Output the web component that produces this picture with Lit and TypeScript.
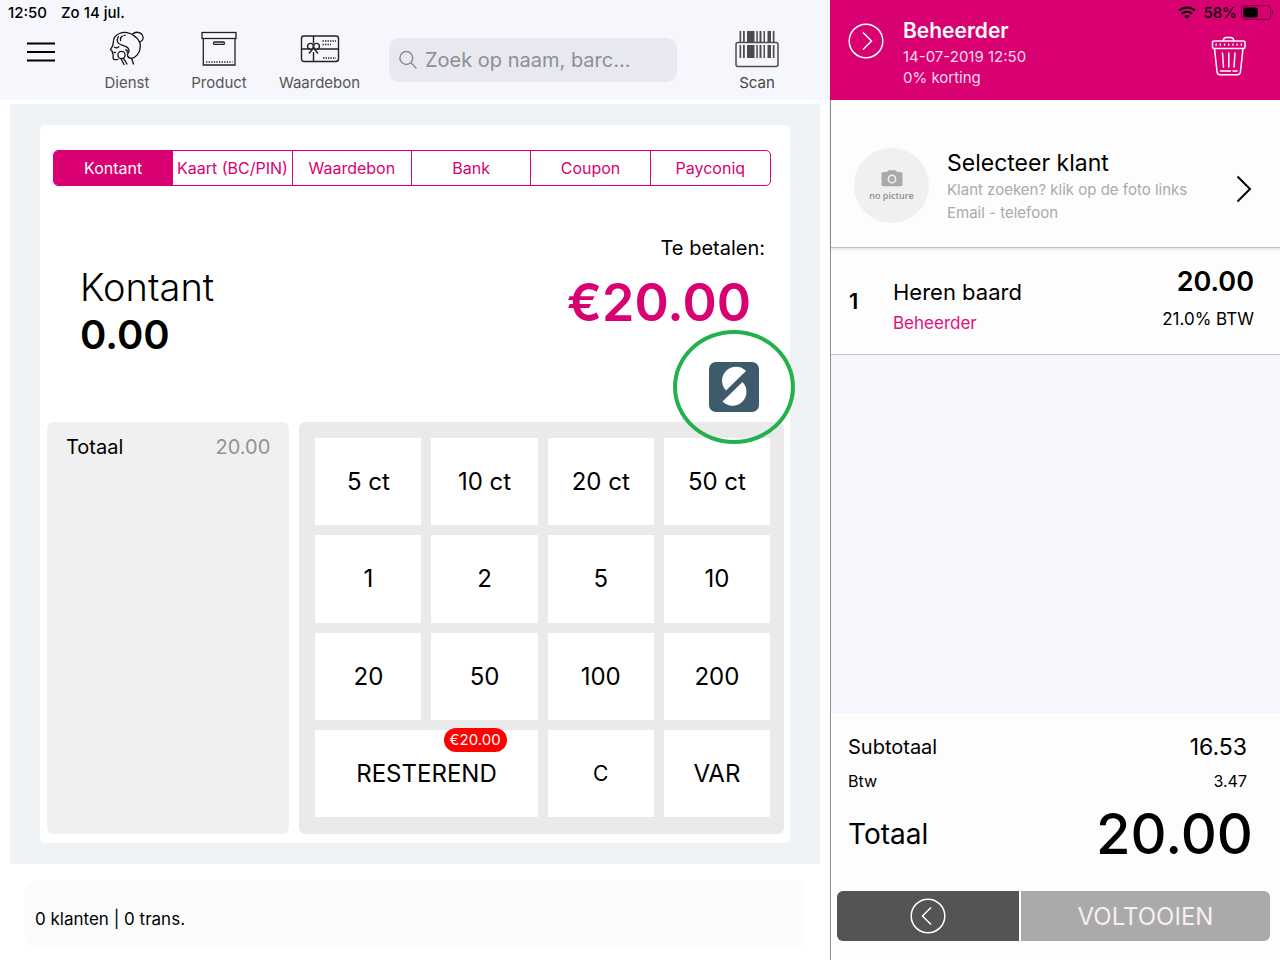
import { LitElement, html, css, svg } from "lit";
import { customElement, state } from "lit/decorators.js";
import { classMap } from "lit/directives/class-map.js";

const methods = ["Kontant", "Kaart (BC/PIN)", "Waardebon", "Bank", "Coupon", "Payconiq"];

const keys = [
  "5 ct", "10 ct", "20 ct", "50 ct",
  "1", "2", "5", "10",
  "20", "50", "100", "200",
];

const faceIcon = svg`
  <svg width="36" height="36" viewBox="0 0 36 36" fill="none" stroke="#111" stroke-width="1.3" stroke-linecap="round" stroke-linejoin="round">
    <path d="M26 5.500C21.500 1.200 15 .6 10.500 2.500C6.500 4 4.300 7.500 4.300 11.500C4.300 14.500 2.800 16.500 1.500 18.700C1.300 19.300 3 19.600 3.200 20.200L3.500 22.500L4.300 24L4 27C4.200 28.800 6.500 28.800 9 28.400"/>
    <path d="M23.500 3.300C25.500 .6 30.500 .4 33 3.500C35.300 6.800 33.800 10 31 11"/>
    <path d="M26 5.500C29.500 8 31.700 11.500 31.300 16C31 22 27 26.800 22.500 27.300L24.500 33"/>
    <path d="M9.300 5.500C7 10 8.500 13 13 14.200C17 15.200 20.300 17 20 20C19.800 22.300 18 22.500 18.500 24.500C19 26.300 20.500 27.300 22.500 27.300"/>
    <path d="M11.500 9.500C11 6.500 13 4.300 16 4.400" stroke-dasharray="5 2 1 2"/>
    <path d="M5.500 16.300C7 17.300 8.500 17 9.800 15.800"/>
    <circle cx="12.500" cy="24" r="3.600"/>
    <path d="M12 27.800L15 33.500M14.500 27.400L18 33M5 21.500H6.500"/>
    <path d="M16.500 19C18 18.500 19 20 18 21.300"/>
  </svg>`;

const boxIcon = svg`
  <svg width="36" height="36" viewBox="0 0 36 36" fill="none" stroke="#222" stroke-width="1.3">
    <rect x="1" y="1.500" width="34" height="6"/>
    <path d="M2.300 7.500V34H34V7.500"/>
    <rect x="12.500" y="11" width="11" height="2.400" rx="1.200"/>
    <path d="M5 31H31.500" stroke-dasharray="1.300 1.300"/>
  </svg>`;

const giftIcon = svg`
  <svg width="40" height="36" viewBox="0 0 40 36" fill="none" stroke="#222" stroke-width="1.400">
    <rect x="1.500" y="5" width="37" height="25.500" rx="2.500"/>
    <path d="M13.500 5V12.500M13.500 21V30.500M1.500 18H10M17 18H38.500"/>
    <circle cx="10.500" cy="15.300" r="2.900"/>
    <circle cx="16.500" cy="15.300" r="2.900"/>
    <path d="M13.500 17L9 22.500M13.500 17L18 22.500"/>
    <path d="M22.500 10H36M22.500 13.500H31M23 27H36" stroke-dasharray="1.400 1.100"/>
  </svg>`;

const scanIcon = svg`
  <svg width="44" height="38" viewBox="0 0 44 38" fill="#4c4c4c">
    <path d="M4.500 0H6.200V11H4.500ZM8 0H9.800V11H8ZM12 0H19.500V11H12ZM21.300 0H22.800V11H21.300ZM24.500 0H26.500V11H24.500ZM28.500 0H30V11H28.500ZM32.500 0H36V11H32.500ZM37.800 0H39.500V11H37.800Z"/>
    <path d="M4.500 14H6.200V27H4.500ZM8 14H9.800V27H8ZM12 14H19.500V27H12ZM21.300 14H22.800V27H21.300ZM24.500 14H26.500V27H24.500ZM28.500 14H30V27H28.500ZM32.500 14H36V27H32.500ZM37.800 14H39.500V27H37.800Z"/>
    <rect x="1" y="11.500" width="42" height="24" rx="2" fill="none" stroke="#4c4c4c" stroke-width="1.500"/>
  </svg>`;

const trashIcon = svg`
  <svg width="36" height="40" viewBox="0 0 36 40" fill="none" stroke="#fff" stroke-width="1.500" stroke-linejoin="round" stroke-linecap="round">
    <path d="M12 5C12.500 2.500 13.500 1.500 15 1.500H20C21.500 1.500 22.500 2.500 23 5"/>
    <rect x="1.500" y="5" width="32.500" height="7.500" rx="1.500"/>
    <path d="M4.500 8.700H31.500" stroke-width="2.200" stroke-dasharray="1.300 2.900" stroke-linecap="butt"/>
    <path d="M3.500 12.500L6 35.500C6.200 37.500 7 38.800 9 38.800H26.500C28.500 38.800 29.300 37.500 29.500 35.500L32 12.500"/>
    <path d="M11.500 17L12.500 31M17.800 17V31M24 17L23 31M9.500 35H19.500M22 35H26"/>
  </svg>`;

const wifiIcon = svg`
  <svg width="18" height="13" viewBox="0 0 18 13" fill="none" stroke="#000" stroke-width="2.100">
    <path d="M1 4.600C5.500 .4 12.500 .4 17 4.600M3.900 7.700C6.800 5 11.200 5 14.100 7.700"/>
    <path d="M9 12.800L6.200 10C7.800 8.600 10.200 8.600 11.800 10Z" fill="#000" stroke="none"/>
  </svg>`;

const batteryIcon = svg`
  <svg width="33" height="15" viewBox="0 0 33 15">
    <rect x=".6" y=".6" width="29" height="13.800" rx="3.500" fill="none" stroke="#000" stroke-opacity=".4" stroke-width="1.100"/>
    <rect x="2.300" y="2.500" width="14.500" height="10" rx="1.800"/>
    <path d="M31 5V10C32.500 9.500 32.500 5.500 31 5Z" fill-opacity=".45"/>
  </svg>`;

const circleArrow = (d: string) => svg`
  <svg width="36" height="36" viewBox="0 0 36 36" fill="none" stroke="#fff" stroke-width="1.500">
    <circle cx="18" cy="18" r="16.800"/>
    <path d=${d}/>
  </svg>`;

const cameraIcon = svg`
  <svg width="22" height="17" viewBox="0 0 22 17">
    <path d="M2.500 2H6L7.500 .3H14.500L16 2H19.500C20.800 2 21.500 2.800 21.500 4V14.300C21.500 15.500 20.800 16.300 19.500 16.300H2.500C1.200 16.300 .5 15.500 .5 14.300V4C.5 2.800 1.200 2 2.500 2Z" fill="#a9a9a9"/>
    <circle cx="11" cy="9" r="3.700" fill="none" stroke="#f0f0f0" stroke-width="1.500"/>
  </svg>`;

const logoIcon = svg`
  <svg width="50" height="50" viewBox="0 0 50 50">
    <rect width="50" height="50" rx="7" fill="#3e5b6b"/>
    <path d="M37 9A13.800 13.800 0 0 0 17 28.500Z" fill="#fff"/>
    <path d="M13.500 39.500A13.800 13.800 0 0 0 33.500 20Z" fill="#fff"/>
  </svg>`;

@customElement("app-root")
export class AppRoot extends LitElement {
  static styles = css`
    :host {
      display: block;
      font-family: Inter, "Liberation Sans", sans-serif;
      color: #000;
      --pink: #d90071;
    }
    * { box-sizing: border-box; }
    svg { display: block; flex: none; }
    button {
      font: inherit;
      color: inherit;
      background: none;
      border: 0;
      padding: 0;
      margin: 0;
      cursor: pointer;
    }
    h1, h2, p, dl, dt, dd { margin: 0; }
    h1, h2 { font-weight: 400; }
    .app {
      display: grid;
      grid-template-columns: minmax(0, 83fr) minmax(0, 45fr);
      min-height: 100vh;
      background: #fff;
    }
    .left, .right { display: flex; flex-direction: column; }

    .topbar { height: 100px; background: #f6f7fc; }
    .status {
      display: flex;
      gap: 14px;
      height: 25px;
      padding-left: 8px;
      align-items: center;
      font-size: 15px;
      font-weight: 500;
    }
    .tools { display: flex; height: 75px; padding: 4px 0 0 27px; }
    .menu { width: 28px; height: 46px; }
    .tool {
      display: flex;
      flex-direction: column;
      align-items: center;
      width: 92px;
      height: 64px;
      font-size: 15px;
      line-height: 20px;
      color: #555;
    }
    .tool .pic { height: 44px; padding-top: 2px; display: flex; align-items: flex-start; }
    .tool.first { margin-left: 26px; }
    .tool.wide { width: 109px; }
    .tool.scan { width: 146px; color: #444; }
    .search {
      flex: 1;
      min-width: 0;
      display: flex;
      align-items: center;
      gap: 8px;
      height: 44px;
      margin: 9px 7px 0 15px;
      padding: 0 10px;
      border-radius: 11px;
      background: #e8e8f1;
    }
    .search input {
      flex: 1;
      min-width: 0;
      border: 0;
      padding: 0;
      outline: 0;
      background: none;
      font: inherit;
      font-size: 20px;
      color: #333;
    }
    .search input::placeholder { color: #8e8e93; opacity: 1; }

    .stage {
      flex: 1;
      display: flex;
      margin: 4px 10px 0;
      padding: 21px 30px;
      background: #eff3f5;
    }
    .card {
      flex: 1;
      display: flex;
      flex-direction: column;
      padding: 25px 6px 9px 7px;
      border-radius: 6px;
      background: #fff;
    }
    .methods {
      display: grid;
      grid-template-columns: repeat(6, minmax(0, 1fr));
      height: 36px;
      margin: 0 13px 0 6px;
      border: 1px solid var(--pink);
      border-radius: 5px;
      overflow: hidden;
    }
    .method {
      font-size: 16px;
      color: var(--pink);
      white-space: nowrap;
      border-right: 1px solid var(--pink);
    }
    .method:last-child { border-right: 0; }
    .method.on { background: var(--pink); color: #fff; }
    .amounts {
      display: flex;
      justify-content: space-between;
      height: 236px;
      padding: 48px 19px 0 33px;
    }
    .paid { padding-top: 29px; font-size: 38px; line-height: 48px; }
    .paid h1 { font-size: inherit; font-weight: 300; }
    .paid p { font-size: 40px; font-weight: 600; }
    .due { display: flex; flex-direction: column; align-items: flex-end; }
    .due .label { font-size: 20px; line-height: 28px; }
    .due .sum {
      margin: 9px 14px 0 0;
      font-size: 52px;
      line-height: 64px;
      font-weight: 600;
      color: var(--pink);
    }
    .brand { position: relative; z-index: 1; margin: 27px 6px 0 0; }
    .ring {
      position: absolute;
      width: 122px;
      height: 114px;
      top: -32px;
      left: -36px;
      border: 4px solid #22b14c;
      border-radius: 50%;
      pointer-events: none;
    }
    .desk {
      flex: 1;
      display: grid;
      grid-template-columns: minmax(0, 1fr) minmax(0, 2fr);
      gap: 10px;
    }
    .tally {
      display: flex;
      justify-content: space-between;
      padding: 12px 19px;
      border-radius: 6px;
      background: #f0f0f0;
      font-size: 20px;
      line-height: 26px;
    }
    .tally dd { color: #929297; }
    .keypad {
      display: grid;
      grid-template-columns: repeat(4, minmax(0, 1fr));
      grid-auto-rows: minmax(60px, 1fr);
      gap: 10px;
      padding: 16px 14px 17px 16px;
      border-radius: 6px;
      background: #eaeaea;
      font-size: 24px;
    }
    .key { position: relative; background: #fff; }
    .key.double { grid-column: span 2; }
    .key.small { font-size: 21px; }
    .badge {
      position: absolute;
      top: -2px;
      right: 31px;
      padding: 0 6px;
      border-radius: 12px;
      background: #f00;
      color: #fff;
      font-size: 15px;
      line-height: 24px;
    }
    .info {
      display: flex;
      align-items: center;
      height: 66px;
      margin: 17px 25px 13px;
      padding: 10px 10px 0;
      border-radius: 10px;
      background: #fcfcfc;
      font-size: 17px;
    }

    .right { background: #fdfdfd; }
    .session {
      position: relative;
      display: flex;
      height: 100px;
      padding: 15px 33px 0 18px;
      background: var(--pink);
      color: #fff;
    }
    .session .go { height: 36px; margin: 8px 19px 0 0; }
    .session .who { flex: 1; font-size: 15px; line-height: 21px; color: #fbdcec; }
    .session h2 { font-size: 21px; line-height: 31px; font-weight: 600; color: #fff; }
    .session .bin { height: 40px; margin-top: 21px; }
    .device {
      position: absolute;
      top: 5px;
      right: 6px;
      display: flex;
      align-items: center;
      gap: 7px;
      color: #000;
      font-size: 15px;
      line-height: 15px;
      font-weight: 500;
    }
    .device .charge { display: flex; gap: 4px; }
    .body {
      flex: 1;
      display: flex;
      flex-direction: column;
      border-left: 1px solid #8e8e8e;
    }
    .client {
      position: relative;
      display: flex;
      height: 148px;
      padding: 48px 28px 0 23px;
      border-bottom: 1px solid #bcc2c2;
      box-shadow: 0 1px 3px rgba(0, 0, 0, 0.14);
    }
    .photo {
      display: flex;
      flex-direction: column;
      align-items: center;
      width: 75px;
      height: 75px;
      padding-top: 22px;
      border-radius: 50%;
      background: #f0f0f0;
      color: #8f8f8f;
      font-family: "Open Sans", sans-serif;
      font-size: 9px;
      line-height: 18px;
      font-weight: 600;
      white-space: nowrap;
    }
    .client .who { flex: 1; padding-left: 18px; font-size: 15px; line-height: 23px; color: #aaa; }
    .client h2 { font-size: 23px; line-height: 30px; color: #000; }
    .client .next { height: 28px; margin-top: 27px; }
    .line {
      display: flex;
      align-items: center;
      height: 107px;
      padding: 0 26px 0 18px;
      border-bottom: 1px solid #c4c4c8;
    }
    .line .qty { width: 44px; font-size: 22px; font-weight: 600; }
    .line .what { flex: 1; font-size: 22px; line-height: 32px; padding-top: 12px; }
    .line .by { font-size: 17px; line-height: 30px; color: #e0107f; }
    .line .price { text-align: right; font-size: 27px; line-height: 36px; font-weight: 600; }
    .line .vat { font-size: 17px; line-height: 38px; font-weight: 400; }
    .rest { flex: 1; background: #f6f7fc; }
    .totals { padding: 16px 27px 0 17px; height: 178px; }
    .row { display: flex; justify-content: space-between; align-items: center; }
    .row.sub { height: 36px; padding-right: 6px; font-size: 20px; }
    .row.sub dd { font-size: 23px; }
    .row.tax { height: 32px; padding-right: 6px; font-size: 16px; }
    .row.all { height: 74px; font-size: 28px; }
    .row.all dd { font-size: 56px; font-weight: 500; }
    .actions {
      display: grid;
      grid-template-columns: minmax(0, 182fr) minmax(0, 249fr);
      gap: 2px;
      height: 50px;
      margin: 0 10px 19px 6px;
      border-radius: 6px;
      overflow: hidden;
    }
    .back { display: flex; align-items: center; justify-content: center; background: #545454; }
    .finish { background: #aaa; color: #f9eef4; font-size: 24px; }
  `;

  @state() private method = 0;

  render() {
    return html`
      <div class="app">
        <div class="left">
          <header class="topbar">
            <div class="status"><span>12:50</span><span>Zo 14 jul.</span></div>
            <div class="tools">
              <button class="menu" aria-label="Menu">
                <svg width="28" height="46" viewBox="0 0 28 46" stroke="#000" stroke-width="2"><path d="M0 14.500H28M0 23H28M0 31.500H28"/></svg>
              </button>
              <button class="tool first"><span class="pic">${faceIcon}</span>Dienst</button>
              <button class="tool"><span class="pic">${boxIcon}</span>Product</button>
              <button class="tool wide"><span class="pic">${giftIcon}</span>Waardebon</button>
              <label class="search">
                <svg width="18" height="20" viewBox="0 0 18 20" fill="none" stroke="#8e8e93" stroke-width="1.500" stroke-linecap="round"><circle cx="7.300" cy="8" r="6.400"/><path d="M12 12.700L17 18"/></svg>
                <input type="text" placeholder="Zoek op naam, barc..." aria-label="Zoeken" />
              </label>
              <button class="tool scan"><span class="pic">${scanIcon}</span>Scan</button>
            </div>
          </header>

          <main class="stage">
            <section class="card">
              <div class="methods">
                ${methods.map((m, i) => html`
                  <button
                    class=${classMap({ method: true, on: i === this.method })}
                    aria-pressed=${i === this.method ? "true" : "false"}
                    @click=${() => (this.method = i)}
                  >${m}</button>`)}
              </div>
              <div class="amounts">
                <div class="paid"><h1>${methods[this.method]}</h1><p>0.00</p></div>
                <div class="due">
                  <p class="label">Te betalen:</p>
                  <p class="sum">€20.00</p>
                  <div class="brand">${logoIcon}<span class="ring"></span></div>
                </div>
              </div>
              <div class="desk">
                <dl class="tally"><dt>Totaal</dt><dd>20.00</dd></dl>
                <div class="keypad">
                  ${keys.map((k) => html`<button class="key">${k}</button>`)}
                  <button class="key double">RESTEREND<span class="badge">€20.00</span></button>
                  <button class="key small">C</button>
                  <button class="key">VAR</button>
                </div>
              </div>
            </section>
          </main>
          <footer class="info">0 klanten | 0 trans.</footer>
        </div>

        <aside class="right">
          <header class="session">
            <button class="go" aria-label="Verder">${circleArrow("M15 9.500L23.500 18L15 26.500")}</button>
            <div class="who"><h2>Beheerder</h2><p>14-07-2019 12:50</p><p>0% korting</p></div>
            <button class="bin" aria-label="Verwijderen">${trashIcon}</button>
            <div class="device">${wifiIcon}<span class="charge">58% ${batteryIcon}</span></div>
          </header>
          <div class="body">
            <section class="client">
              <button class="photo">${cameraIcon}<span>no picture</span></button>
              <div class="who">
                <h2>Selecteer klant</h2>
                <p>Klant zoeken? klik op de foto links</p>
                <p>Email - telefoon</p>
              </div>
              <button class="next" aria-label="Klant openen">
                <svg width="16" height="28" viewBox="0 0 16 28" fill="none" stroke="#000" stroke-width="2"><path d="M1.500 1.500L14 14L1.500 26.500"/></svg>
              </button>
            </section>
            <section class="line">
              <span class="qty">1</span>
              <div class="what"><p>Heren baard</p><p class="by">Beheerder</p></div>
              <div class="price"><p>20.00</p><p class="vat">21.0% BTW</p></div>
            </section>
            <div class="rest"></div>
            <dl class="totals">
              <div class="row sub"><dt>Subtotaal</dt><dd>16.53</dd></div>
              <div class="row tax"><dt>Btw</dt><dd>3.47</dd></div>
              <div class="row all"><dt>Totaal</dt><dd>20.00</dd></div>
            </dl>
            <div class="actions">
              <button class="back" aria-label="Terug">${circleArrow("M21 9.500L12.500 18L21 26.500")}</button>
              <button class="finish">VOLTOOIEN</button>
            </div>
          </div>
        </aside>
      </div>
    `;
  }
}
